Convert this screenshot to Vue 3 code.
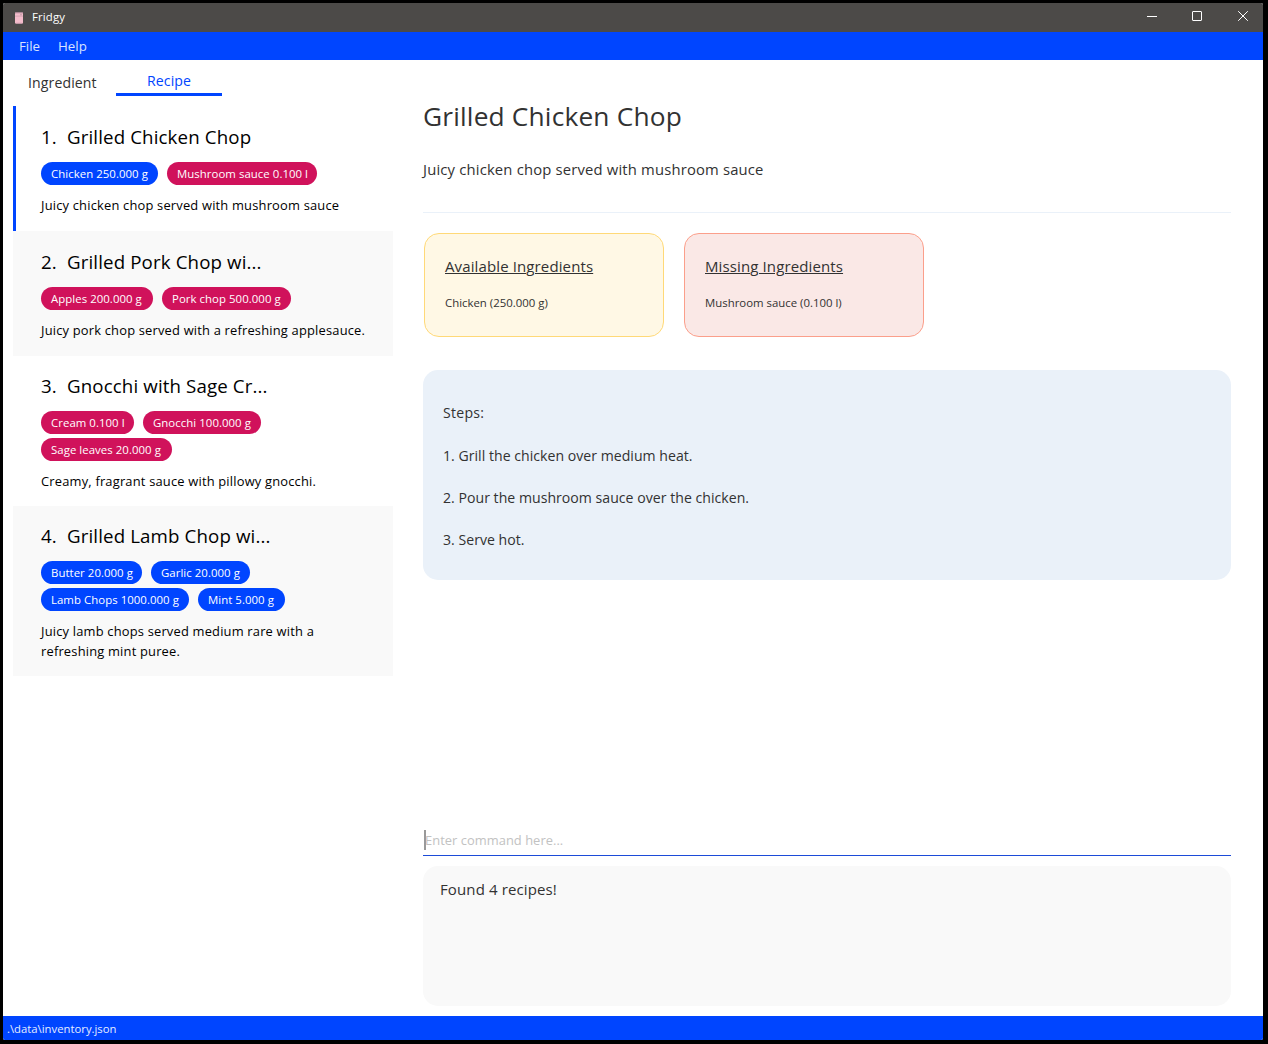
<script setup>
const recipes = [
  {
    id: 1,
    name: 'Grilled Chicken Chop',
    desc: ['Juicy chicken chop served with mushroom sauce'],
    rows: [[{ t: 'Chicken 250.000 g', ok: true, w: 117 }, { t: 'Mushroom sauce 0.100 l', w: 150 }]],
  },
  {
    id: 2,
    name: 'Grilled Pork Chop wi...',
    desc: ['Juicy pork chop served with a refreshing applesauce.'],
    rows: [[{ t: 'Apples 200.000 g', w: 112 }, { t: 'Pork chop 500.000 g', w: 129 }]],
  },
  {
    id: 3,
    name: 'Gnocchi with Sage Cr...',
    desc: ['Creamy, fragrant sauce with pillowy gnocchi.'],
    rows: [[{ t: 'Cream 0.100 l', w: 93 }, { t: 'Gnocchi 100.000 g', w: 118 }], [{ t: 'Sage leaves 20.000 g', w: 131 }]],
  },
  {
    id: 4,
    name: 'Grilled Lamb Chop wi...',
    desc: ['Juicy lamb chops served medium rare with a', 'refreshing mint puree.'],
    rows: [
      [{ t: 'Butter 20.000 g', ok: true, w: 101 }, { t: 'Garlic 20.000 g', ok: true, w: 99 }],
      [{ t: 'Lamb Chops 1000.000 g', ok: true, w: 148 }, { t: 'Mint 5.000 g', ok: true, w: 87 }],
    ],
  },
]
const steps = ['Grill the chicken over medium heat.', 'Pour the mushroom sauce over the chicken.', 'Serve hot.']
</script>

<template>
  <div class="desktop">
    <div class="window">
      <header class="titlebar">
        <svg class="app-icon" width="8" height="12" viewBox="0 0 8 12">
          <rect x="0" y="0.5" width="8" height="11" rx="1.2" fill="#f4bccb" />
          <rect x="0" y="0" width="8" height="1.2" rx="0.6" fill="#a98593" />
          <rect x="0" y="3.7" width="8" height="0.8" fill="#cf9fb0" />
          <rect x="5.5" y="1.8" width="1" height="1.6" fill="#a98593" />
          <rect x="0.5" y="10.8" width="7" height="1" fill="#c798a8" />
        </svg>
        <span class="app-name">Fridgy</span>
        <div class="controls">
          <svg width="10" height="10" viewBox="0 0 10 10"><path d="M0 5.5H10" /></svg>
          <svg width="10" height="10" viewBox="0 0 10 10"><rect x="0.5" y="0.5" width="9" height="9" rx="0.5" /></svg>
          <svg class="close" width="10" height="10" viewBox="0 0 10 10"><path d="M0.2 0.2L9.8 9.8M9.8 0.2L0.2 9.8" /></svg>
        </div>
      </header>
      <nav class="menubar"><span>File</span><span>Help</span></nav>

      <main class="body">
        <aside class="side">
          <div class="tabs">
            <div class="tab">Ingredient</div>
            <div class="tab active">Recipe</div>
          </div>
          <ul class="list">
            <li v-for="r in recipes" :key="r.id" class="card" :class="{ selected: r.id === 1, tall: r.rows.length > 1, alt: r.id % 2 === 0 }">
              <h2><span class="num">{{ r.id }}.</span><span>{{ r.name }}</span></h2>
              <div class="tags">
                <div v-for="(row, i) in r.rows" :key="i" class="tag-row">
                  <span v-for="g in row" :key="g.t" class="tag" :class="{ ok: g.ok }" :style="{ width: g.w + 'px' }">{{ g.t }}</span>
                </div>
              </div>
              <p><span v-for="d in r.desc" :key="d">{{ d }}</span></p>
            </li>
          </ul>
        </aside>

        <section class="detail">
          <h1>Grilled Chicken Chop</h1>
          <p class="lead">Juicy chicken chop served with mushroom sauce</p>
          <hr />
          <div class="boxes">
            <div class="box available"><h3>Available Ingredients</h3><p>Chicken (250.000 g)</p></div>
            <div class="box missing"><h3>Missing Ingredients</h3><p>Mushroom sauce (0.100 l)</p></div>
          </div>
          <div class="steps">
            <p class="steps-title">Steps:</p>
            <p v-for="(s, i) in steps" :key="s">{{ i + 1 }}. {{ s }}</p>
          </div>
          <div class="spacer"></div>
          <div class="command"><i class="caret"></i><span>Enter command here...</span></div>
          <div class="result">Found 4 recipes!</div>
        </section>
      </main>
      <footer class="status">.\data\inventory.json</footer>
    </div>
  </div>
</template>

<style>
body { margin: 0; background: #000; }
</style>
<style scoped>
* { box-sizing: border-box; }
h1, h2, h3, p, ul { margin: 0; padding: 0; font-weight: 400; }
.desktop {
  width: 1268px; height: 1044px; padding: 3px 5px 4px 3px; background: #000;
  font-family: "Open Sans", "Noto Sans", sans-serif; color: #323232; white-space: nowrap; overflow: hidden;
}
.window { height: 1037px; display: flex; flex-direction: column; background: #fff; border-radius: 2px; overflow: hidden; }
.titlebar { height: 29px; background: #4c4a48; display: flex; align-items: center; padding-left: 12px; color: #fff; }
.app-icon { margin-top: 1px; }
.app-name { margin-left: 9px; font-size: 11.4px; letter-spacing: 0.15px; line-height: 16px; margin-top: -1px; }
.controls { margin-left: auto; display: flex; gap: 35px; padding-right: 15px; margin-top: -3px; }
.controls svg { fill: none; stroke: #fff; stroke-width: 1; }
.controls .close { margin-left: 1px; }
.menubar { height: 28px; background: #0045ff; color: #d9e3ff; display: flex; align-items: center; padding: 0 0 1px 16px; font-size: 13.3px; gap: 18px; }
.body { flex: 1; display: flex; min-height: 0; }
.side { width: 380px; margin-left: 10px; }
.tabs { height: 46px; display: flex; align-items: flex-start; }
.tab { width: 103px; padding-left: 15px; font-size: 14.1px; letter-spacing: 0.1px; line-height: 20px; margin-top: 13px; }
.tab.active { width: 106px; height: 25px; margin-top: 11px; padding: 0; text-align: center; color: #0045ff; border-bottom: 3px solid #0045ff; }
.list { list-style: none; }
.card { padding: 18px 0 16px 28px; color: #000; }
.card.alt { background: #f9f9f9; }
.card.selected { border-left: 3px solid #0045ff; padding-left: 25px; }
.card.tall { padding: 17px 0 15px 28px; }
.card h2 { font-size: 18.7px; letter-spacing: 0.13px; line-height: 26px; height: 38px; display: flex; }
.num { width: 26px; }
.tags { display: flex; flex-direction: column; gap: 4px; margin-bottom: 10px; }
.tag-row { display: flex; gap: 9px; }
.tag { height: 23px; border-radius: 12px; background: #d0125b; color: #fff; font-size: 11.4px; letter-spacing: 0.05px; line-height: 23px; padding-left: 10px; }
.tag.ok { background: #0045ff; }
.card p { display: flex; flex-direction: column; font-size: 12.9px; letter-spacing: 0.19px; line-height: 20px; }
.detail { width: 808px; margin-left: 30px; display: flex; flex-direction: column; padding: 37px 0 10px; }
h1 { font-size: 26.3px; letter-spacing: 0.17px; line-height: 40px; margin-top: -1px; }
.lead { font-size: 14.8px; letter-spacing: 0.18px; line-height: 24px; margin-top: 21px; }
hr { width: 100%; height: 1px; border: 0; margin: 31px 0 20px; background: #eaf1f9; }
.boxes { display: flex; gap: 20px; margin-left: 1px; }
.box { width: 240px; height: 104px; border: 1px solid #ffd978; border-radius: 15px; background: #fff8e5; padding: 20px; }
.missing { background: #fae8e6; border-color: #fb9f8b; }
.box h3 { font-size: 15px; letter-spacing: 0.12px; line-height: 24px; text-decoration: underline; text-decoration-thickness: 1px; text-underline-offset: 1px; }
.box p { font-size: 11.4px; line-height: 18px; margin-top: 16px; }
.steps { margin-top: 33px; height: 210px; border-radius: 15px; background: #eaf1f9; padding: 33px 20px; font-size: 14.1px; letter-spacing: 0.02px; line-height: 22px; display: flex; flex-direction: column; gap: 20px; }
.steps-title { margin-top: -1px; margin-bottom: 1px; letter-spacing: 0.25px; }
.spacer { flex: 1; }
.command { height: 26px; border-bottom: 1px solid #1c4bd8; display: flex; align-items: flex-start; font-size: 12.9px; letter-spacing: 0.04px; line-height: 21px; color: #c2c2c2; }
.caret { width: 2px; height: 20px; margin: 0 -1px 0 1px; background: #999; }
.result { margin-top: 10px; height: 140px; border-radius: 15px; background: #f9f9f9; padding: 12px 17px; font-size: 15px; letter-spacing: 0.12px; line-height: 22px; }
.status { height: 24px; background: #0045ff; color: #e6edff; font-size: 11.3px; line-height: 24px; padding: 1px 0 0 4px; }
</style>
